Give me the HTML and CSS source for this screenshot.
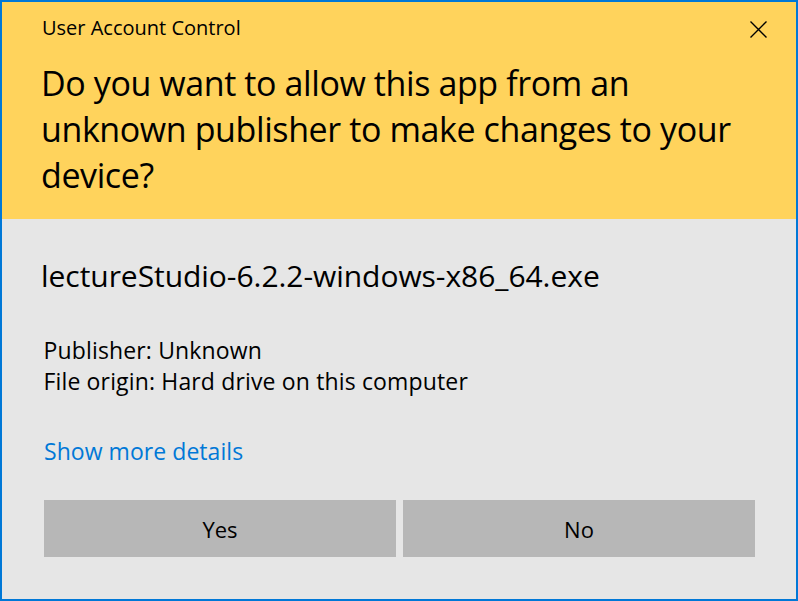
FILE: index.html
```html
<!DOCTYPE html>
<html>
<head>
<meta charset="utf-8">
<link rel="stylesheet" href="styles.css">
</head>
<body>
<div class="dialog">
  <header class="top">
    <div class="titlebar">
      <span class="title">User Account Control</span>
      <svg class="close" width="17" height="17" viewBox="0 0 17 17"><path d="M0.5 0.5 L16.5 16.5 M16.5 0.5 L0.5 16.5" stroke="#000" stroke-width="1.4" fill="none"/></svg>
    </div>
    <h1 class="question">Do you want to allow this app from an unknown publisher to make changes to your device?</h1>
  </header>
  <main class="body">
    <div class="filename">lectureStudio-6.2.2-windows-x86_64.exe</div>
    <div class="details">
      <div>Publisher: Unknown</div>
      <div>File origin: Hard drive on this computer</div>
    </div>
    <a class="more" href="#">Show more details</a>
    <div class="buttons">
      <button class="btn">Yes</button>
      <button class="btn">No</button>
    </div>
  </main>
</div>
</body>
</html>
```
FILE: styles.css
```css
* { box-sizing: border-box; }
html, body { margin: 0; padding: 0; }
body {
  width: 798px;
  height: 601px;
  font-family: "Open Sans", "Noto Sans", sans-serif;
  color: #000;
}
.dialog {
  width: 798px;
  height: 601px;
  border: 2px solid #0078d7;
  background: #e6e6e6;
  display: flex;
  flex-direction: column;
}
.top {
  background: #ffd35c;
  height: 217px;
  flex: none;
  padding: 0 0 0 40px;
}
.titlebar {
  display: flex;
  justify-content: space-between;
  align-items: flex-start;
  height: 57.5px;
  padding-top: 12px;
  padding-right: 29px;
}
.title {
  font-size: 20px;
  line-height: 28px;
  letter-spacing: 0;
}
.close { margin-top: 7px; }
.question {
  margin: 0 0 0 -1px;
  width: 715px;
  font-weight: normal;
  font-size: 34px;
  line-height: 46.3px;
  letter-spacing: -0.4px;
}
.body {
  padding: 0 0 0 39px;
  display: flex;
  flex-direction: column;
}
.filename {
  margin-top: 37px;
  font-size: 30px;
  line-height: 40px;
  letter-spacing: -0.05px;
}
.details {
  margin-top: 39px;
  padding-left: 2.5px;
  font-size: 23px;
  line-height: 31px;
  letter-spacing: 0.15px;
}
.more {
  margin-top: 39px;
  margin-left: 3px;
  font-size: 23px;
  line-height: 31px;
  color: #0078d7;
  text-decoration: none;
  letter-spacing: 0.05px;
  align-self: flex-start;
}
.buttons {
  margin-top: 33.4px;
  display: grid;
  grid-template-columns: 352px 352px;
  gap: 7px;
  padding-left: 3px;
}
.btn {
  height: 57px;
  border: none;
  background: #b7b7b7;
  font-family: inherit;
  font-size: 22px;
  color: #000;
  padding: 0;
}
```
